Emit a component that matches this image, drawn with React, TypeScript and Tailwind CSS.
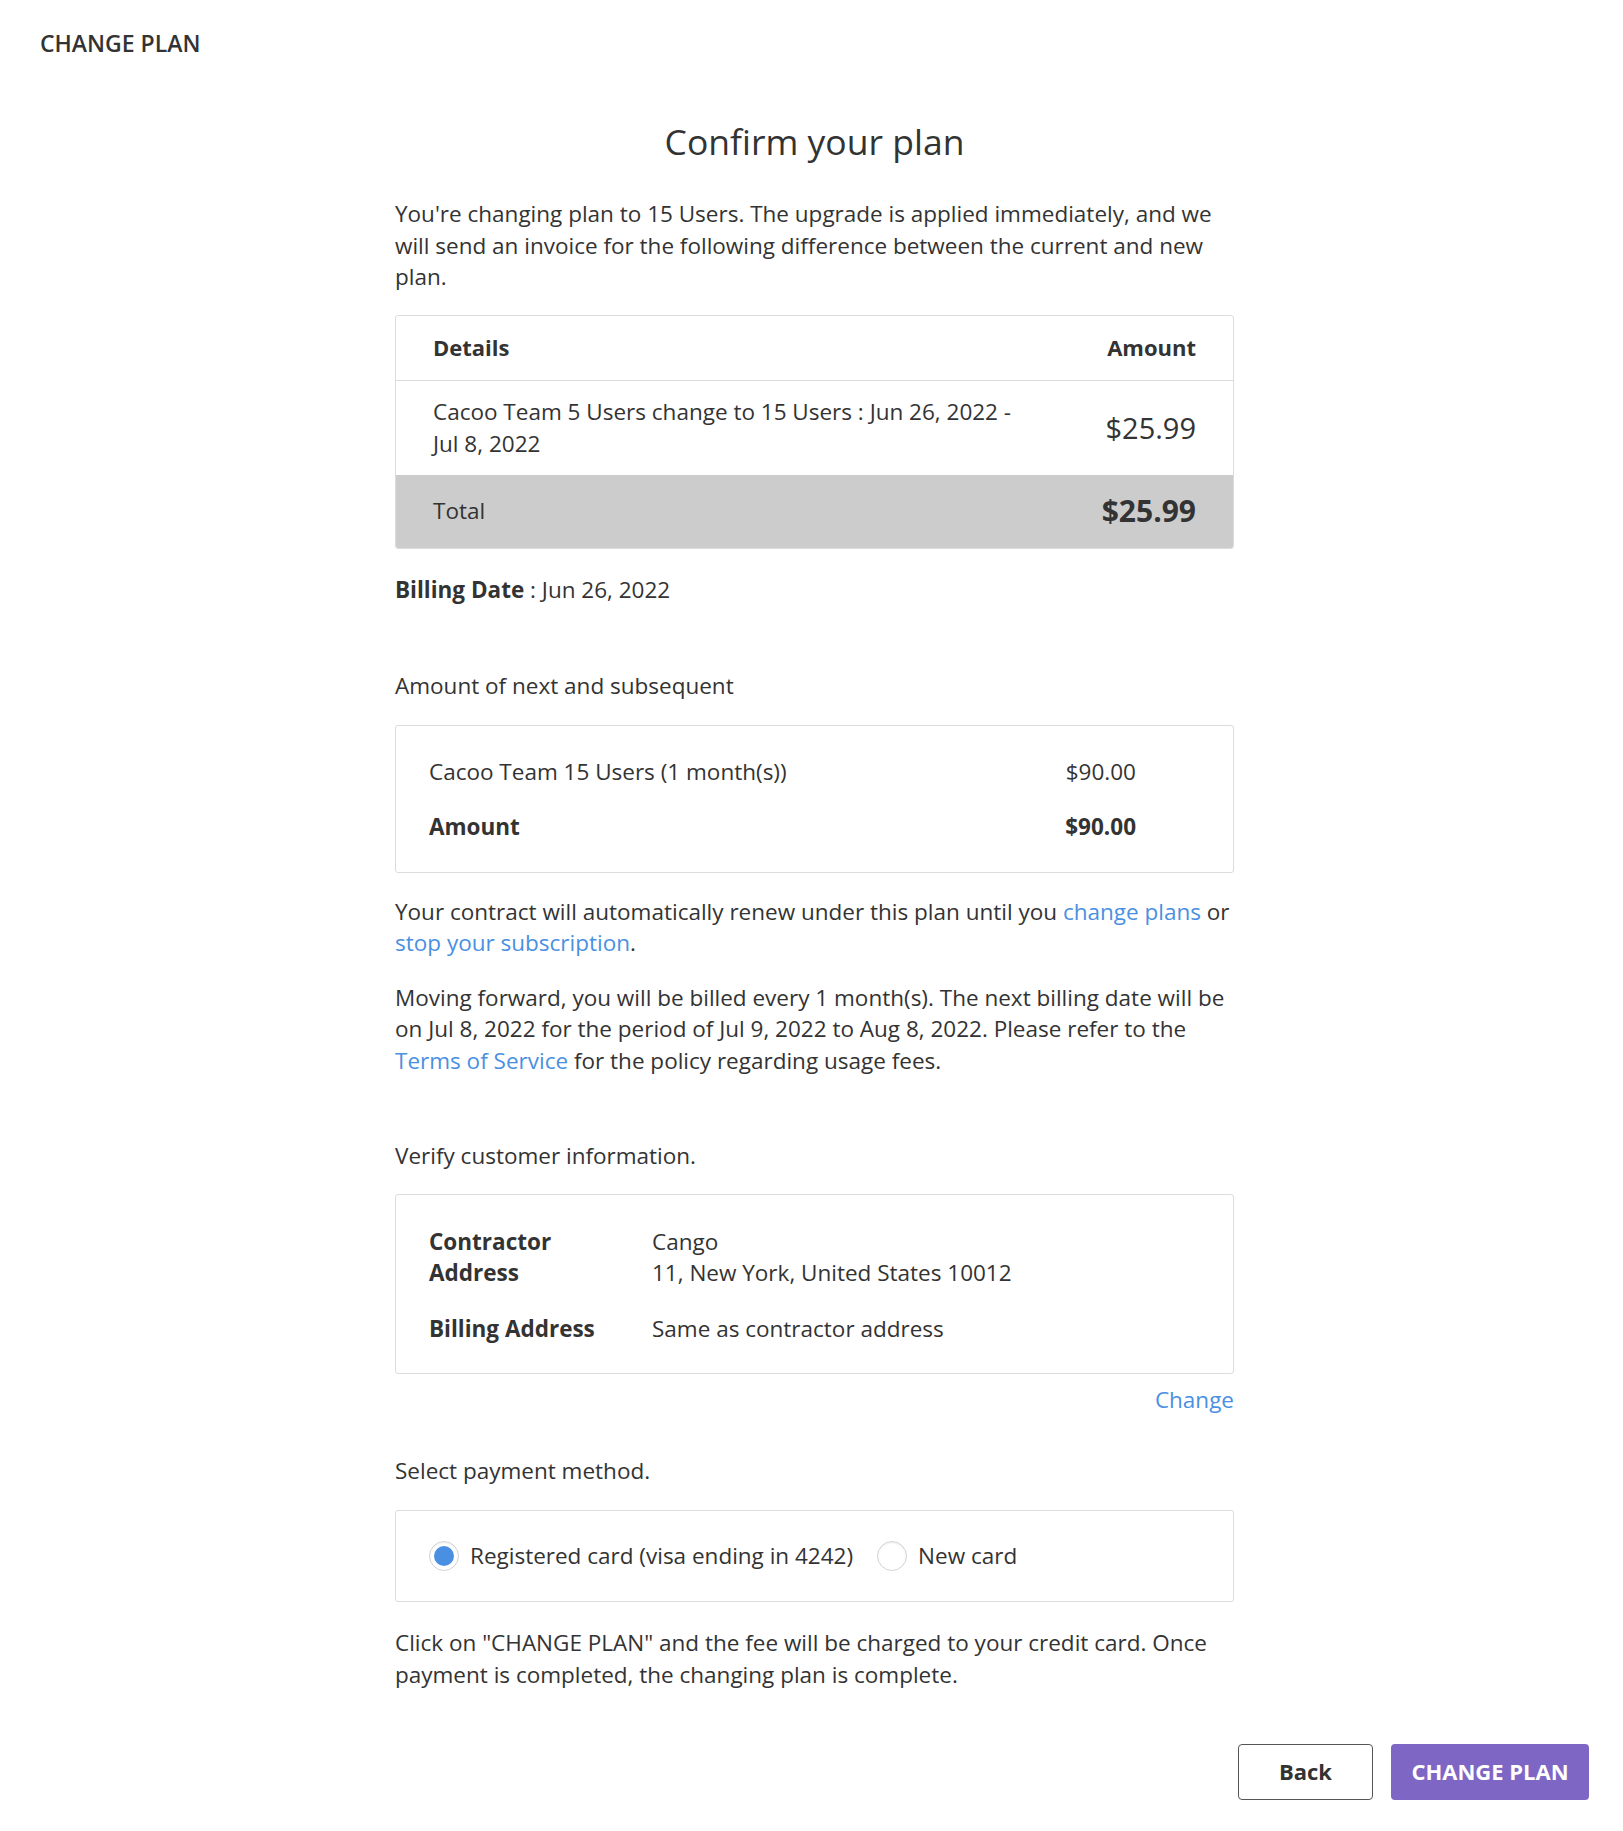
import React from "react";

const LINK = "text-[#4a90e2]";

function Radio({ checked, label }: { checked?: boolean; label: string }) {
  return (
    <label className="flex items-center gap-[11px]">
      <span className="flex h-[30px] w-[30px] items-center justify-center rounded-full border border-[#d4d4d4] bg-white shadow-[inset_0_1px_2px_rgba(0,0,0,0.08)]">
        {checked && <span className="h-[20px] w-[20px] rounded-full bg-[#4a90e2]" />}
      </span>
      <span>{label}</span>
    </label>
  );
}

export default function App() {
  return (
    <div className="min-h-[1831px] bg-white font-['Open_Sans',sans-serif] text-[22.5px] leading-[31.5px] text-[#333]">
      <header className="px-[40px] pt-[28px]">
        <h1 className="text-[23px] leading-[30px] font-semibold">CHANGE PLAN</h1>
      </header>

      <main className="ml-[395px] w-[839px]">
        <h2 className="mt-[59px] text-center text-[35.5px] leading-[48px]">Confirm your plan</h2>

        <p className="mt-[33px]">
          You're changing plan to 15 Users. The upgrade is applied immediately, and we will send an invoice for the
          following difference between the current and new plan.
        </p>

        <div className="mt-[22px] overflow-hidden rounded-[3px] border border-[#dcdcdc]">
          <div className="grid h-[65px] grid-cols-[1fr_auto] items-center border-b border-[#dcdcdc] px-[37px] text-[22px] font-bold">
            <span>Details</span>
            <span>Amount</span>
          </div>
          <div className="grid h-[94px] grid-cols-[1fr_auto] items-center pl-[37px] pr-[37px]">
            <span className="pr-[80px]">Cacoo Team 5 Users change to 15 Users : Jun 26, 2022 - Jul 8, 2022</span>
            <span className="text-[29px]">$25.99</span>
          </div>
          <div className="grid h-[73px] grid-cols-[1fr_auto] items-center bg-[#cccccc] px-[37px]">
            <span>Total</span>
            <span className="text-[30px] font-bold">$25.99</span>
          </div>
        </div>

        <p className="mt-[25px]">
          <span className="font-bold">Billing Date</span> : Jun 26, 2022
        </p>

        <p className="mt-[65px]">Amount of next and subsequent</p>

        <div className="mt-[23px] flex flex-col gap-[24px] rounded-[3px] border border-[#dcdcdc] pb-[29px] pl-[33px] pr-[97px] pt-[30px]">
          <div className="flex justify-between">
            <span>Cacoo Team 15 Users (1 month(s))</span>
            <span>$90.00</span>
          </div>
          <div className="flex justify-between font-bold">
            <span>Amount</span>
            <span>$90.00</span>
          </div>
        </div>

        <p className="mt-[23px]">
          Your contract will automatically renew under this plan until you <a className={LINK}>change plans</a> or{" "}
          <a className={LINK}>stop your subscription</a>.
        </p>

        <p className="mt-[23px]">
          Moving forward, you will be billed every 1 month(s). The next billing date will be on Jul 8, 2022 for the
          period of Jul 9, 2022 to Aug 8, 2022. Please refer to the <a className={LINK}>Terms of Service</a> for the
          policy regarding usage fees.
        </p>

        <p className="mt-[64px]">Verify customer information.</p>

        <div className="mt-[22px] rounded-[3px] border border-[#dcdcdc] pb-[29px] pl-[33px] pt-[31px]">
          <div className="grid grid-cols-[223px_1fr] gap-y-[24px]">
            <span className="font-bold">
              Contractor
              <br />
              Address
            </span>
            <span>
              Cango
              <br />
              11, New York, United States 10012
            </span>
            <span className="font-bold">Billing Address</span>
            <span>Same as contractor address</span>
          </div>
        </div>

        <div className="mt-[10px] flex justify-end">
          <a className={LINK}>Change</a>
        </div>

        <p className="mt-[39px]">Select payment method.</p>

        <div className="mt-[24px] flex h-[92px] items-center gap-[24px] rounded-[3px] border border-[#dcdcdc] pl-[33px]">
          <Radio checked label="Registered card (visa ending in 4242)" />
          <Radio label="New card" />
        </div>

        <p className="mt-[25px]">
          Click on "CHANGE PLAN" and the fee will be charged to your credit card. Once payment is completed, the
          changing plan is complete.
        </p>
      </main>

      <div className="mt-[54px] flex justify-end gap-[18px] pr-[34px]">
        <button className="h-[56px] w-[135px] rounded-[4px] border-[1.5px] border-[#555] bg-white text-[22px] font-bold text-[#333]">
          Back
        </button>
        <button className="h-[56px] w-[198px] rounded-[4px] bg-[#7e66c4] text-[22px] font-bold text-white">
          CHANGE PLAN
        </button>
      </div>
    </div>
  );
}
